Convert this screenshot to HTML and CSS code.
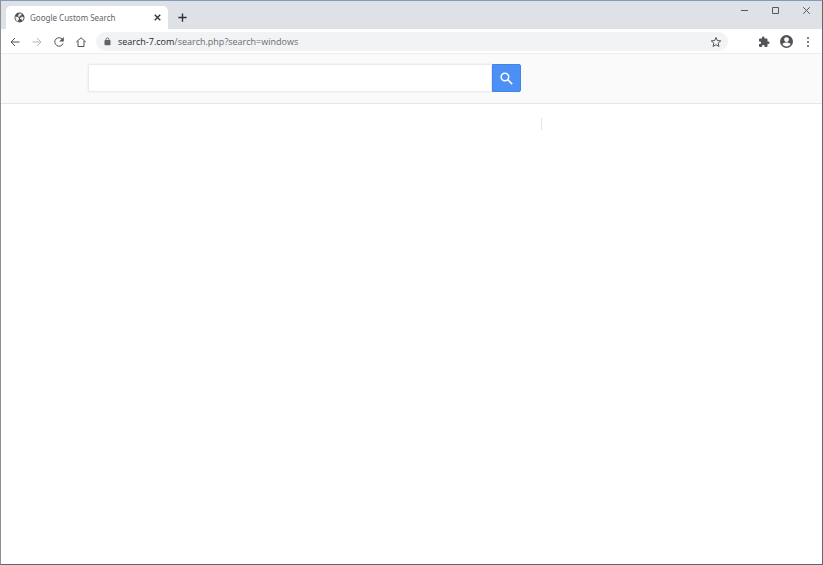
FILE: index.html
```html
<!DOCTYPE html>
<html lang="en">
<head>
<meta charset="utf-8">
<title>Google Custom Search</title>
<link rel="stylesheet" href="styles.css">
</head>
<body>
<div class="window">
  <header class="tabstrip">
    <div class="tab">
      <svg class="favicon" viewBox="0 0 24 24" aria-hidden="true"><circle cx="12" cy="12" r="11" fill="#4d5156"/><path d="M3 10l5 1 3 2v3l-2 2v3C5 20 3 16 3 12zM12 3l5 1-1 3-3 1-1 3-3-1 0-3zM14 12l4-2 3 2c0 3-1 5-3 7l-2-3-3-1z" fill="#eef0f2"/></svg>
      <span class="tab-title">Google Custom Search</span>
      <button class="icon-button tab-close" aria-label="Close tab"><svg viewBox="0 0 24 24"><path d="M6 6l12 12M18 6L6 18" class="line heavy"/></svg></button>
    </div>
    <button class="icon-button new-tab" aria-label="New tab"><svg viewBox="0 0 24 24"><path d="M12 3v18M3 12h18" class="line heavy"/></svg></button>
    <div class="window-controls">
      <button class="icon-button" aria-label="Minimize"><svg viewBox="0 0 9 9"><path d="M1 4.500h7" class="thin"/></svg></button>
      <button class="icon-button" aria-label="Maximize"><svg viewBox="0 0 9 9"><path d="M1.500 1.500h6v6h-6z" class="thin"/></svg></button>
      <button class="icon-button" aria-label="Close"><svg viewBox="0 0 9 9"><path d="M1.200 1.200l6.600 6.600M7.800 1.200L1.200 7.800" class="thin"/></svg></button>
    </div>
  </header>
  <nav class="toolbar" aria-label="Browser toolbar">
    <button class="icon-button" aria-label="Back"><svg viewBox="0 0 24 24"><path d="M21 12H4M12 4l-8 8 8 8" class="line"/></svg></button>
    <button class="icon-button" aria-label="Forward" disabled><svg viewBox="0 0 24 24"><path d="M3 12h17M12 4l8 8-8 8" class="line"/></svg></button>
    <button class="icon-button" aria-label="Reload"><svg viewBox="0 0 24 24"><path d="M19 7a8.500 8.500 0 1 0 1 8" class="line"/><path d="M21.500 2v9h-9z" fill="currentColor"/></svg></button>
    <button class="icon-button" aria-label="Home"><svg viewBox="0 0 24 24"><path d="M2.500 12L12 3.500l9.500 8.500M6 10v11h12V10" class="line"/></svg></button>
    <div class="omnibox">
      <svg class="lock" viewBox="0 0 24 24" aria-hidden="true"><path d="M18 8h-1V6A5 5 0 0 0 7 6v2H6a2 2 0 0 0-2 2v10a2 2 0 0 0 2 2h12a2 2 0 0 0 2-2V10a2 2 0 0 0-2-2zM9 8V6a3 3 0 0 1 6 0v2z" fill="#5f6368"/></svg>
      <div class="url" role="textbox" contenteditable="true" spellcheck="false" aria-label="Address"><span class="host">search-7.com</span>/search.php?search=windows</div>
      <button class="icon-button star" aria-label="Bookmark"><svg viewBox="0 0 24 24"><path d="M12 3l2.700 6.200 6.800.600-5.200 4.500 1.600 6.700-5.900-3.600L6.100 21l1.600-6.700-5.200-4.500 6.800-.600z" class="line"/></svg></button>
    </div>
    <div class="actions">
      <button class="icon-button" aria-label="Extensions"><svg viewBox="0 0 24 24"><path d="M20.500 11H19V7a2 2 0 0 0-2-2h-4V3.500a2.500 2.500 0 0 0-5 0V5H4a2 2 0 0 0-2 2v3.800h1.500a2.700 2.700 0 0 1 0 5.400H2V20a2 2 0 0 0 2 2h3.800v-1.500a2.700 2.700 0 0 1 5.400 0V22H17a2 2 0 0 0 2-2v-4h1.500a2.500 2.500 0 0 0 0-5z" fill="currentColor"/></svg></button>
      <button class="icon-button profile" aria-label="Profile"><svg viewBox="0 0 24 24"><path fill-rule="evenodd" d="M12 0a12 12 0 1 0 0 24 12 12 0 0 0 0-24zm0 4a4.500 4.500 0 1 1 0 9 4.500 4.500 0 0 1 0-9zm0 17c-3.200 0-6-1.600-7.500-4 .1-2 5-3 7.500-3s7.400 1 7.500 3c-1.500 2.400-4.300 4-7.500 4z" fill="currentColor"/></svg></button>
      <button class="icon-button" aria-label="Menu"><svg viewBox="0 0 24 24"><g fill="currentColor"><circle cx="12" cy="4" r="2"/><circle cx="12" cy="12" r="2"/><circle cx="12" cy="20" r="2"/></g></svg></button>
    </div>
  </nav>
  <form class="search-header">
    <input class="query" type="text" aria-label="Search">
    <button class="search-button" aria-label="Search" type="button"><svg viewBox="0 0 24 24"><circle cx="9.500" cy="9.500" r="6" /><path d="M14 14l7 7"/></svg></button>
  </form>
  <main class="results"><div class="divider"></div></main>
</div>
</body>
</html>
```
FILE: styles.css
```css
* { box-sizing: border-box; }
body {
  margin: 0;
  font-family: "Open Sans", "Noto Sans", sans-serif;
  background: #fff;
}
button { font: inherit; }
.window {
  min-height: 100vh;
  display: flex;
  flex-direction: column;
  border: 1px solid #666;
  border-top-color: #7f9dc1;
  border-left-color: #8d9092;
}
.tabstrip {
  display: flex;
  height: 28px;
  padding-left: 5px;
  background: #dee1e6;
}
.tab {
  display: flex;
  align-items: center;
  width: 162px;
  margin-top: 5px;
  padding: 0 5px 0 8px;
  background: #fff;
  border-radius: 5px 5px 0 0;
}
.favicon { width: 11px; height: 11px; margin-right: 5px; }
.tab-title {
  flex: 1;
  font-family: "Noto Sans", sans-serif;
  font-size: 8px;
  line-height: 12px;
  color: #5f6368;
  white-space: nowrap;
}
.icon-button {
  display: flex;
  align-items: center;
  justify-content: center;
  flex: none;
  width: 22px;
  height: 22px;
  padding: 0;
  border: 0;
  background: none;
  color: #505357;
}
.icon-button svg { width: 12px; height: 12px; }
.icon-button:disabled { color: #b4b6b9; }
.line { fill: none; stroke: currentColor; stroke-width: 2; }
.heavy { stroke-width: 3; }
.thin { fill: none; stroke: #55585c; stroke-width: 1; }
.tab-close { width: 12px; color: #303235; }
.tab-close svg { width: 11px; height: 11px; }
.new-tab { width: 28px; margin-top: 5px; color: #303235; }
.new-tab svg { width: 11px; height: 11px; }
.window-controls { display: flex; margin-left: auto; }
.window-controls .icon-button { width: 31px; height: 19px; }
.window-controls svg { width: 9px; height: 9px; }
.toolbar {
  display: flex;
  align-items: center;
  height: 25px;
  padding: 1px 3px 0;
  border-bottom: 1px solid #eceded;
}
.omnibox {
  display: flex;
  align-items: center;
  flex: 1;
  height: 19px;
  margin-left: 4px;
  padding: 0 1px 0 7px;
  border-radius: 10px;
  background: #f1f3f4;
}
.lock { width: 9px; height: 9px; margin-right: 6px; }
.url { flex: 1; font-size: 9px; line-height: 16px; color: #696d72; white-space: nowrap; outline: 0; }
.host { color: #27292c; }
.actions { display: flex; margin-left: 25px; }
.profile svg { width: 13px; height: 13px; }
.search-header {
  display: flex;
  height: 50px;
  padding: 10px 87px;
  background: #fafafa;
  border-bottom: 1px solid #e6e6e6;
}
.query {
  flex: 0 1 404px;
  min-width: 0;
  height: 28px;
  padding: 0 8px;
  border: 1px solid #ebebeb;
  border-radius: 2px 0 0 2px;
  box-shadow: 0 0 2px #0000001a;
  background: #fff;
  font: inherit;
  font-size: 13px;
  outline: 0;
}
.search-button {
  display: grid;
  place-items: center;
  flex: none;
  width: 29px;
  height: 28px;
  padding: 0;
  border: 1px solid #4384e8;
  border-radius: 0 2px 2px 0;
  background: #4d90f5;
}
.search-button svg { width: 15px; height: 15px; fill: none; stroke: #fff; stroke-width: 2.500; }
.results { flex: 1; display: flex; padding: 14px 0 0 540px; }
.divider { height: 12px; border-left: 1px solid #e4e5e7; }
```
